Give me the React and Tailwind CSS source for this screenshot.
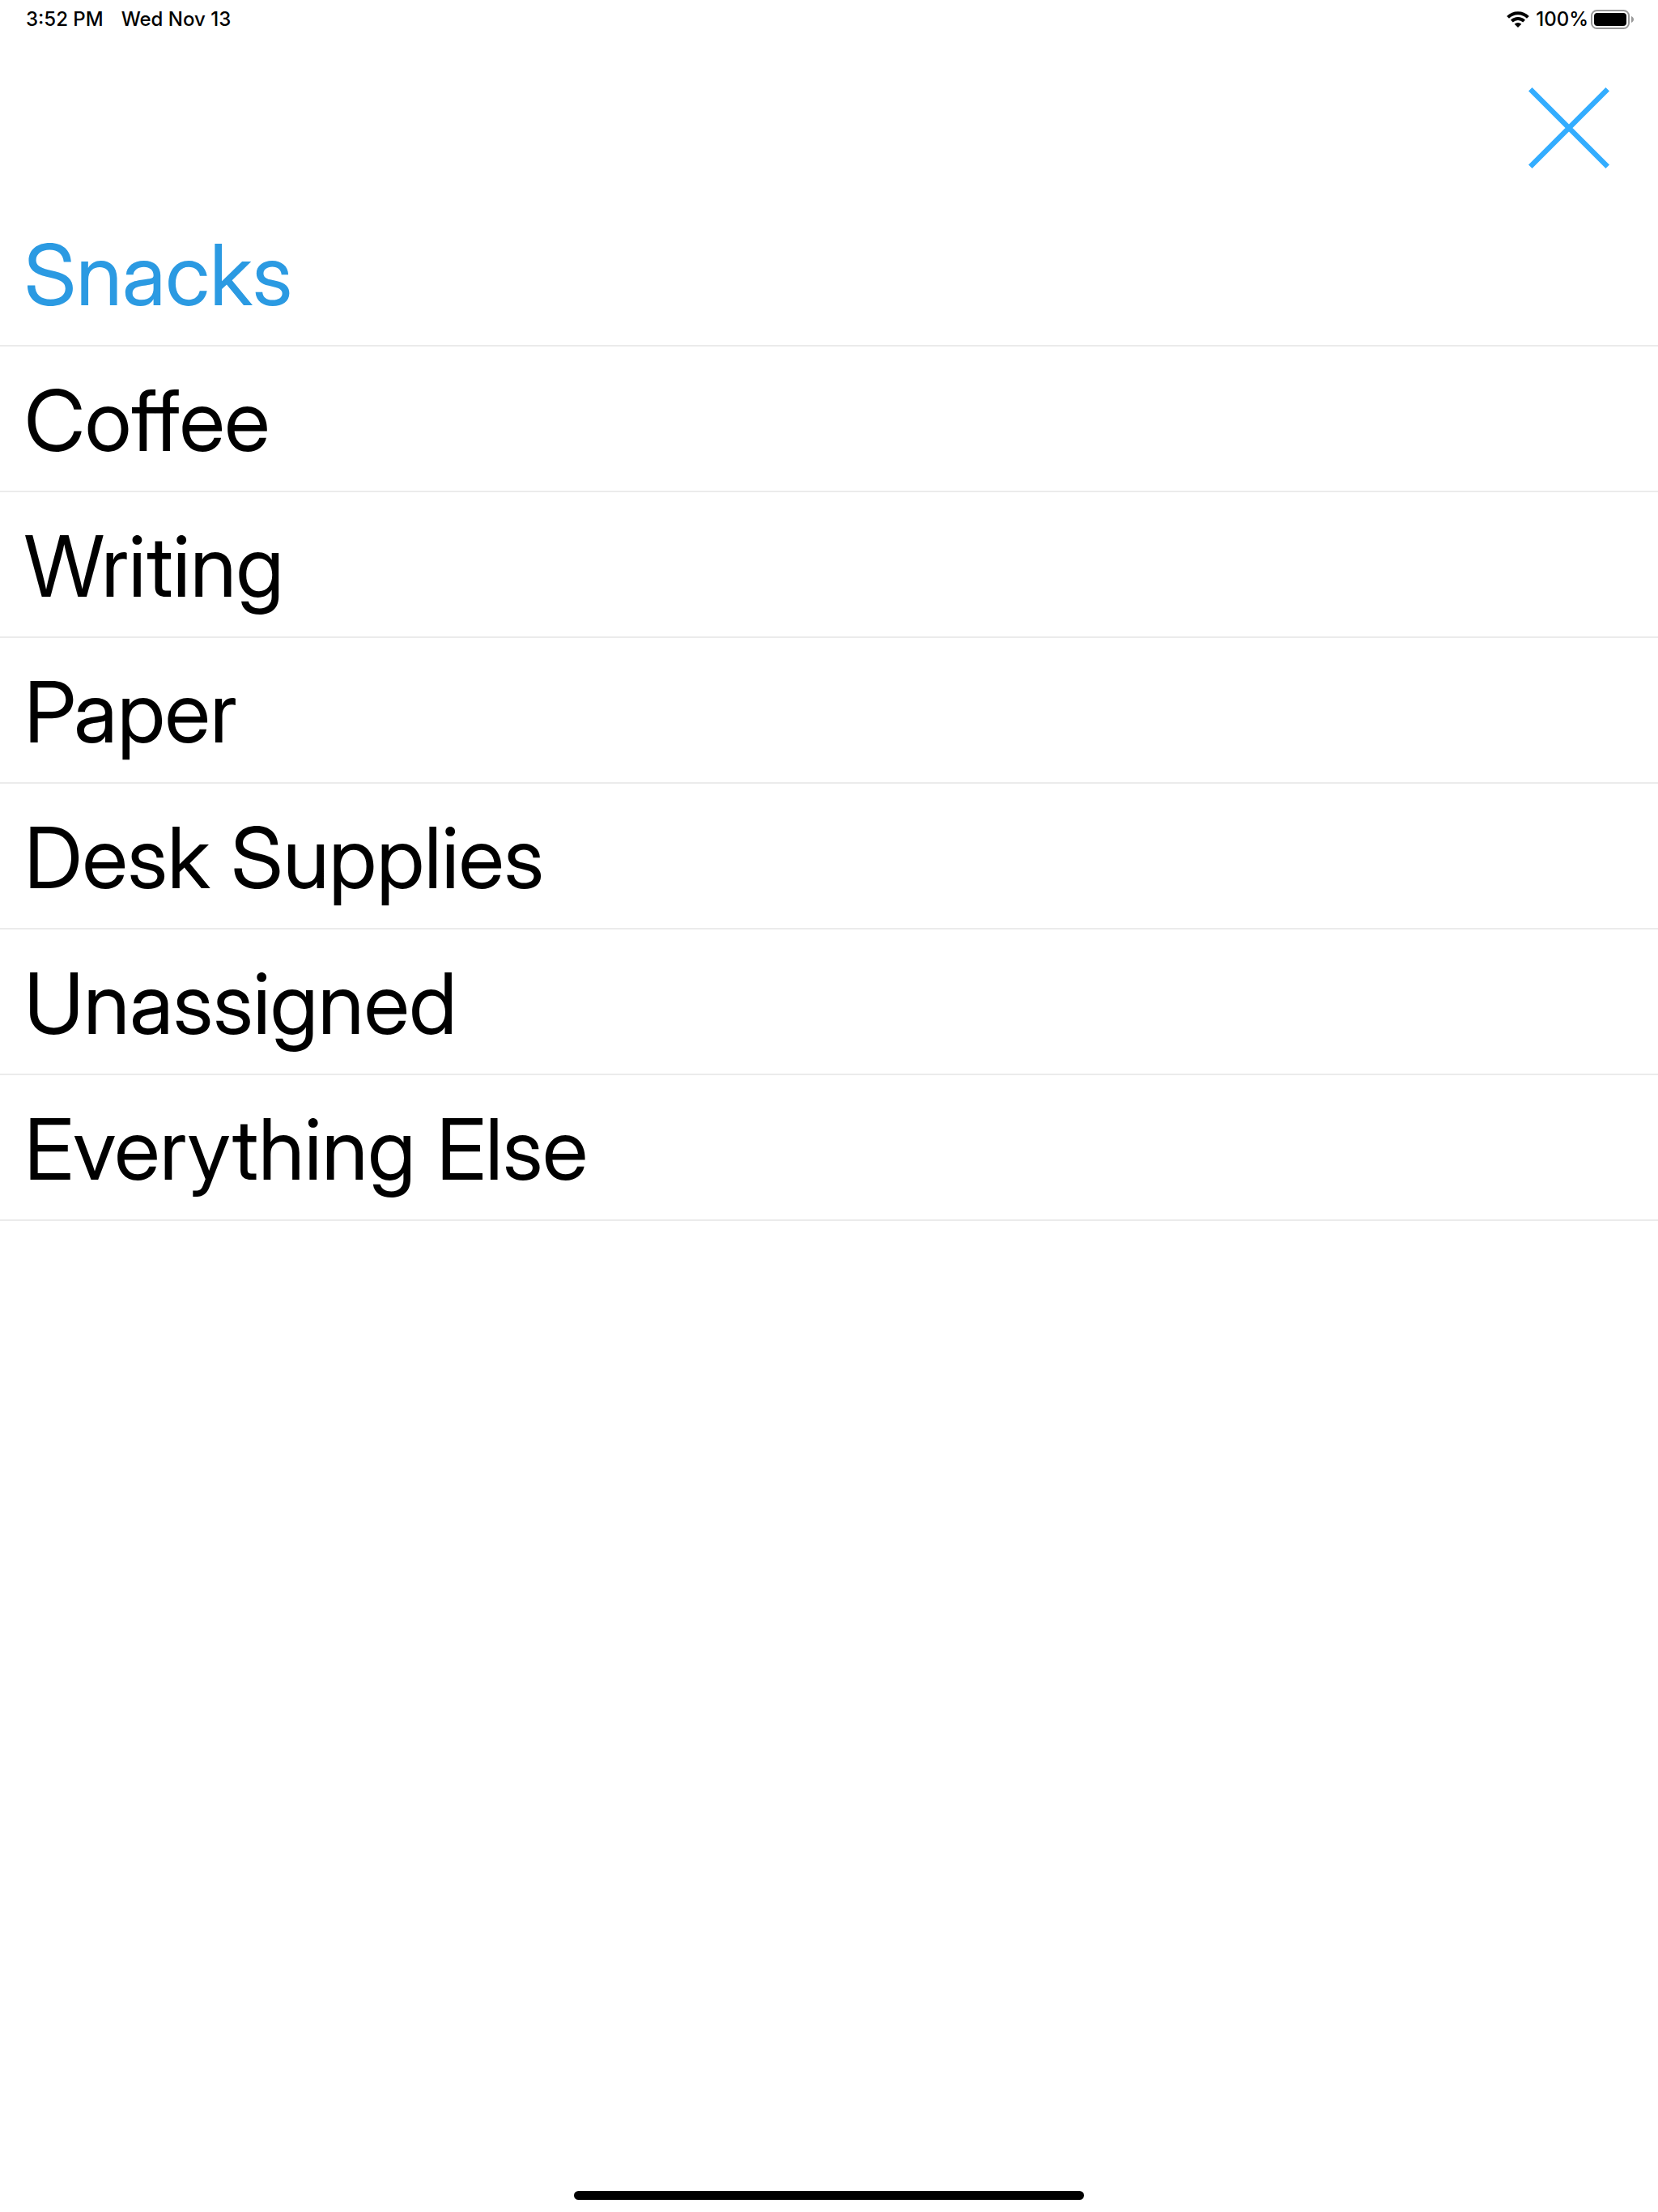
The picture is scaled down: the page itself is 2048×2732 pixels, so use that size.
import { useState } from "react";

const CATEGORIES = [
  "Snacks",
  "Coffee",
  "Writing",
  "Paper",
  "Desk Supplies",
  "Unassigned",
  "Everything Else",
];

function WifiIcon() {
  return (
    <svg width="28" height="20" viewBox="0 0 28 20" fill="none" stroke="currentColor" strokeWidth="4" aria-hidden="true">
      <path d="M1.6 7.4a17.6 17.6 0 0 1 24.8 0" />
      <path d="M6.4 12.2a10.8 10.8 0 0 1 15.2 0" />
      <path d="M14 20l-4.3-4.3a6.1 6.1 0 0 1 8.6 0z" fill="currentColor" stroke="none" />
    </svg>
  );
}

function BatteryIcon() {
  return (
    <svg width="54" height="24" viewBox="0 0 54 24" aria-hidden="true">
      <rect x="1" y="1" width="46" height="22" rx="6.5" fill="none" stroke="#999999" strokeWidth="2" />
      <rect x="4" y="4" width="40" height="16" rx="4" fill="currentColor" />
      <path d="M50 8c4 1.5 4 6.5 0 8z" fill="#999999" />
    </svg>
  );
}

function StatusBar() {
  return (
    <div className="flex h-12 items-center justify-between pl-8 pr-[29px] text-[24px] leading-6 font-medium">
      <div className="flex gap-[22px]">
        <span>3:52 PM</span>
        <span>Wed Nov 13</span>
      </div>
      <div className="flex items-center">
        <WifiIcon />
        <span className="ml-2 mr-[3px]">100%</span>
        <BatteryIcon />
      </div>
    </div>
  );
}

export default function App() {
  const [selected, setSelected] = useState("Snacks");

  return (
    <div className="flex min-h-screen flex-col bg-white font-['Inter',sans-serif] text-black">
      <StatusBar />

      <header className="flex justify-end px-15 pt-15 pb-10">
        <button type="button" aria-label="Close" className="text-[#33adff]">
          <svg width="100" height="100" viewBox="0 0 100 100" fill="none" stroke="currentColor" strokeWidth="6.4">
            <path d="M2.3 2.3l95.4 95.4M97.7 2.3L2.3 97.7" />
          </svg>
        </button>
      </header>

      <ul className="flex-1 font-['Inter_Display','Inter',sans-serif] [font-variant-ligatures:none]">
        {CATEGORIES.map((name) => (
          <li key={name} className="border-b-2 border-[#ebebeb]">
            <button
              type="button"
              onClick={() => setSelected(name)}
              className={`block w-full px-[30px] pt-7 pb-6 text-left text-[104px] leading-[126px] ${
                name === selected ? "text-[#2b9ae2]" : "text-black"
              }`}
            >
              {name}
            </button>
          </li>
        ))}
      </ul>

      {/* Home indicator */}
      <div className="flex justify-center pb-[15px]">
        <div className="h-[11px] w-[630px] rounded-full bg-black" />
      </div>
    </div>
  );
}
